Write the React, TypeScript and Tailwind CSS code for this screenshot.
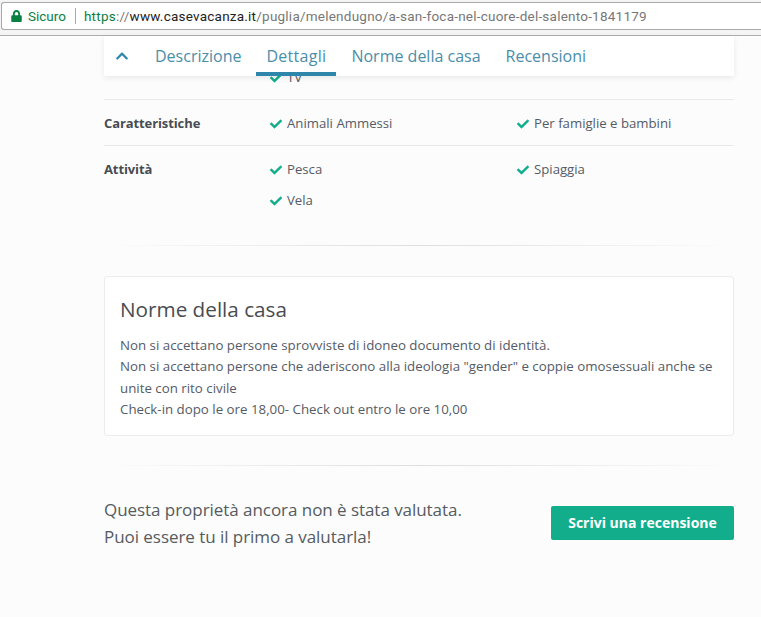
import { FaCheck, FaChevronUp, FaLock } from 'react-icons/fa';

function CheckItem({ label }: { label: string }) {
  return (
    <div className="flex h-[31px] items-center text-[13.2px] text-[#555b66]">
      <FaCheck className="mr-[5px] h-[12px] w-[12px] text-[#12ae8c]" />
      {label}
    </div>
  );
}

function FeatureRow({ title, items, last }: { title: string; items: string[]; last?: boolean }) {
  return (
    <div className={`flex pt-2 pb-[6px] ${last ? '' : 'border-b border-[#e9e9e9]'}`}>
      <div className="flex h-[31px] w-[166px] items-center text-[13px] font-bold tracking-[-0.1px] text-[#484c52]">{title}</div>
      <div className="grid flex-1 grid-cols-[247px_1fr]">
        {items.map((item) => (
          <CheckItem key={item} label={item} />
        ))}
      </div>
    </div>
  );
}

function FadeLine() {
  return <div className="h-px bg-gradient-to-r from-transparent via-[#dedede] to-transparent" />;
}

export default function App() {
  return (
    <div className="flex h-[617px] w-[761px] flex-col overflow-hidden bg-[#fcfcfc] font-['Open_Sans',sans-serif]">
      <div className="h-[36px] shrink-0 border-b border-[#adadad] bg-[#f4f4f4] pt-[2px] pl-px">
        <div className="flex h-[28px] items-center rounded-l-[3px] border border-r-0 border-[#a9a9a9] bg-white pl-[9px] font-['Roboto',sans-serif] text-[13.5px]">
          <FaLock className="h-[12px] w-[11px] text-[#0b8043]" />
          <span className="ml-[6px] text-[#0b8043]">Sicuro</span>
          <span className="mr-[8px] ml-[9px] h-[16px] w-px bg-[#a9a9a9]" />
          <span className="whitespace-nowrap tracking-[0.23px]">
            <span className="text-[#0b8043]">https</span>
            <span className="text-[#777]">://</span>
            <span className="text-[#222]">www.casevacanza.it</span>
            <span className="text-[#777]">/puglia/melendugno/a-san-foca-nel-cuore-del-salento-1841179</span>
          </span>
        </div>
      </div>

      <div className="relative flex-1 pr-[27px] pl-[104px]">
        <nav className="absolute top-0 right-[27px] left-[104px] z-10 flex h-[40px] items-center bg-white pl-[11px] text-[16px] text-[#4a8eaa] shadow-[0_2px_6px_rgba(0,0,0,0.08)]">
          <FaChevronUp className="mr-[26px] h-[14px] w-[14px] text-[#2e86ab]" />
          <span className="mr-[15px]">Descrizione</span>
          <span className="flex h-full w-[80px] items-center justify-center border-b-[4px] border-[#2e86ab] pt-[4px] tracking-[0.3px]">Dettagli</span>
          <span className="ml-[15px]">Norme della casa</span>
          <span className="ml-[25px]">Recensioni</span>
        </nav>

        <div className="mt-[18px]">
          <FeatureRow title="" items={['TV']} />
          <FeatureRow title="Caratteristiche" items={['Animali Ammessi', 'Per famiglie e bambini']} />
          <FeatureRow title="Attività" items={['Pesca', 'Spiaggia', 'Vela']} last />
        </div>

        <div className="mt-[23px]">
          <FadeLine />
        </div>

        <section className="mt-[30px] h-[160px] rounded-[3px] border border-[#ececec] bg-white px-[15px] pt-[17px]">
          <h2 className="text-[20.7px] leading-[30px] text-[#484c52]">Norme della casa</h2>
          <p className="mt-[11px] text-[13.3px] leading-[21.3px] text-[#555b66]">
            Non si accettano persone sprovviste di idoneo documento di identità.
            <br />
            Non si accettano persone che aderiscono alla ideologia "gender" e coppie omosessuali anche se unite con rito civile
            <br />
            Check-in dopo le ore 18,00- Check out entro le ore 10,00
          </p>
        </section>

        <div className="mt-[29px]">
          <FadeLine />
        </div>

        <div className="mt-[30px] flex items-center justify-between">
          <p className="text-[17px] leading-[27px] tracking-[-0.05px] text-[#555b60]">
            Questa proprietà ancora non è stata valutata.
            <br />
            Puoi essere tu il primo a valutarla!
          </p>
          <button className="mb-[1px] h-[34px] w-[183px] rounded-[2px] bg-[#12ae8c] text-[14px] font-bold text-white">
            Scrivi una recensione
          </button>
        </div>
      </div>
    </div>
  );
}
